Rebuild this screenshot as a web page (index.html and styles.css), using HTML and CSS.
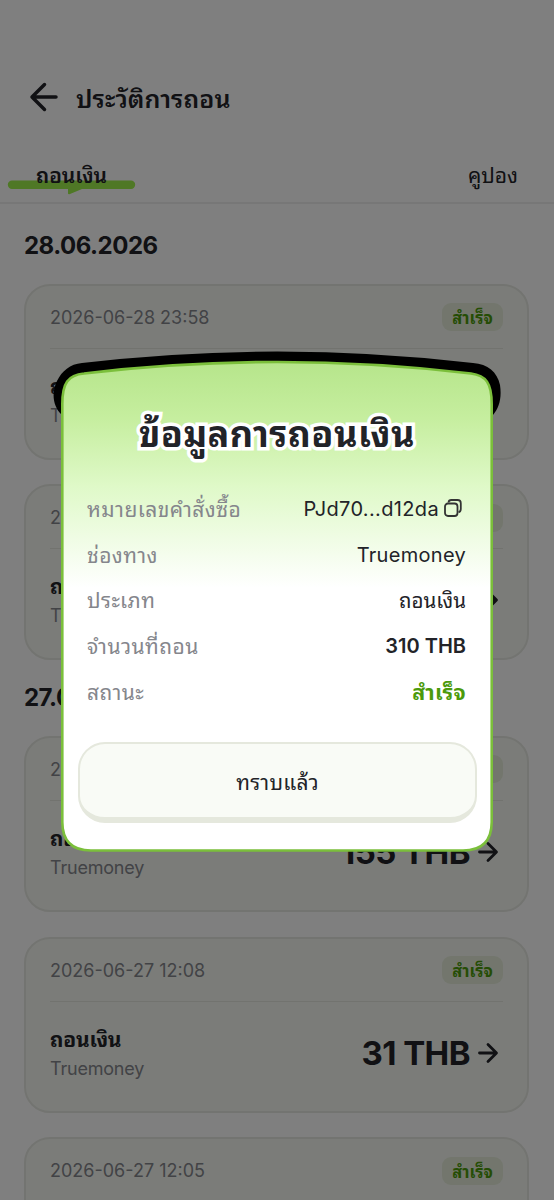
FILE: index.html
```html
<!DOCTYPE html>
<html lang="th">
<head>
<meta charset="utf-8">
<title>ประวัติการถอน</title>
<link rel="stylesheet" href="styles.css">
</head>
<body>
<div class="page">
  <header class="header">
    <svg class="back" width="28" height="28" viewBox="0 0 28 28"><path d="M14.500 1.600 2 14 14.500 26.400M2 14H26"/></svg>
    <h1 class="title">ประวัติการถอน</h1>
  </header>
  <nav class="tabs">
    <div class="tab tab-active">
      <svg class="marker" width="127" height="16" viewBox="0 0 127 16"><path d="M4 .500H123A4.200 4.200 0 0 1 123 8.900H74L62 14Q59.500 15 60 12.500V8.900H4A4.200 4.200 0 0 1 4 .500Z"/></svg>
      <span class="tab-label label-bold">ถอนเงิน</span>
    </div>
    <div class="tab"><span class="tab-label">คูปอง</span></div>
  </nav>
  <main class="list">
    <h2 class="date">28.06.2026</h2>
    <article class="card">
      <div class="card-top"><span class="time">2026-06-28 23:58</span><span class="badge">สำเร็จ</span></div>
      <div class="card-body">
        <div class="info"><span class="kind">ถอนเงิน</span><span class="via">Truemoney</span></div>
        <div class="sum"><span class="amount">310 THB</span><svg class="go" width="20" height="20" viewBox="0 0 20 20"><path d="M1.500 10H18M10 1.500 18.500 10 10 18.500"/></svg></div>
      </div>
    </article>
    <article class="card">
      <div class="card-top"><span class="time">2026-06-28 12:10</span><span class="badge">สำเร็จ</span></div>
      <div class="card-body">
        <div class="info"><span class="kind">ถอนเงิน</span><span class="via">Truemoney</span></div>
        <div class="sum"><span class="amount">155 THB</span><svg class="go" width="20" height="20" viewBox="0 0 20 20"><path d="M1.500 10H18M10 1.500 18.500 10 10 18.500"/></svg></div>
      </div>
    </article>
    <h2 class="date date-next">27.06.2026</h2>
    <article class="card">
      <div class="card-top"><span class="time">2026-06-27 12:10</span><span class="badge">สำเร็จ</span></div>
      <div class="card-body">
        <div class="info"><span class="kind">ถอนเงิน</span><span class="via">Truemoney</span></div>
        <div class="sum"><span class="amount">155 THB</span><svg class="go" width="20" height="20" viewBox="0 0 20 20"><path d="M1.500 10H18M10 1.500 18.500 10 10 18.500"/></svg></div>
      </div>
    </article>
    <article class="card">
      <div class="card-top"><span class="time">2026-06-27 12:08</span><span class="badge">สำเร็จ</span></div>
      <div class="card-body">
        <div class="info"><span class="kind">ถอนเงิน</span><span class="via">Truemoney</span></div>
        <div class="sum"><span class="amount">31 THB</span><svg class="go" width="20" height="20" viewBox="0 0 20 20"><path d="M1.500 10H18M10 1.500 18.500 10 10 18.500"/></svg></div>
      </div>
    </article>
    <article class="card">
      <div class="card-top"><span class="time">2026-06-27 12:05</span><span class="badge">สำเร็จ</span></div>
    </article>
  </main>
</div>
<div class="overlay">
  <section class="modal">
    <svg class="modal-shape" width="446" height="500" viewBox="54 352 446 500">
      <defs><linearGradient id="fade" gradientUnits="userSpaceOnUse" x1="0" y1="362" x2="0" y2="588"><stop offset="0" stop-color="#b6e58b"/><stop offset=".25" stop-color="#c6ee9f"/><stop offset=".55" stop-color="#dff9c8"/><stop offset="1" stop-color="#fff"/></linearGradient></defs>
      <path d="M62 415C53 407 51 393 57 381C62 371 70 364 82 363Q277 340 473 363C488 364 497 372 500 385C502 398 499 408 493 415Z"/>
      <path fill="url(#fade)" stroke="#7bbf3b" stroke-width="2.600" d="M62.300 404C62.300 383 68 375 84 373.500Q277 350.500 471 373.500C486 375.500 491.700 383 491.700 404V822Q491.700 850.500 463 850.500H91Q62.300 850.500 62.300 822Z"/>
    </svg>
    <div class="modal-content">
      <h3 class="modal-title">ข้อมูลการถอนเงิน</h3>
      <dl class="rows">
        <div class="row"><dt>หมายเลขคำสั่งซื้อ</dt><dd class="order">PJd70...d12da<svg class="copy" width="18" height="18" viewBox="0 0 18 18"><rect x="1" y="4.500" width="12.500" height="12.500" rx="3"/><path d="M4.500 3.500Q4.800 1 7.300 1H13.500Q16.800 1 16.800 4.300V10Q16.800 12.800 14.500 13.200"/></svg></dd></div>
        <div class="row"><dt>ช่องทาง</dt><dd class="channel">Truemoney</dd></div>
        <div class="row"><dt>ประเภท</dt><dd class="thai-value">ถอนเงิน</dd></div>
        <div class="row"><dt>จำนวนที่ถอน</dt><dd class="strong">310 THB</dd></div>
        <div class="row"><dt>สถานะ</dt><dd class="success">สำเร็จ</dd></div>
      </dl>
      <button class="ok">ทราบแล้ว</button>
    </div>
  </section>
</div>
</body>
</html>
```
FILE: styles.css
```css
* { box-sizing: border-box; }
body { margin: 0; background: #fff; color: #222328; font-family: Inter, "Noto Sans Thai Looped", Loma, Waree, "Noto Sans", sans-serif; height: 1200px; overflow: hidden; }
h1, h2, h3, dl, dd { margin: 0; }
svg { display: block; flex: none; fill: none; overflow: visible; }
.page { height: 1200px; overflow: hidden; }
.header { display: flex; align-items: center; gap: 18px; height: 146px; padding: 48px 30px 0; }
.back { stroke: #222328; stroke-width: 3.500; stroke-linecap: round; stroke-linejoin: round; }
.title { font-size: 25px; line-height: 36px; font-weight: 600; letter-spacing: .1px; padding-top: 3px; }
.tabs { display: flex; justify-content: space-between; height: 58px; padding: 12px 36px 0; border-bottom: 2px solid #eee; }
.tab { position: relative; height: 36px; }
.tab-label { position: relative; font-size: 21px; line-height: 36px; }
.label-bold { font-weight: 600; }
.marker { position: absolute; left: -28px; top: 22px; fill: #9ff04c; }
.list { padding: 21px 25px 0 24px; }
.date { font-size: 24px; line-height: 40px; font-weight: 700; letter-spacing: -.5px; padding-top: 1px; margin-bottom: 17.500px; }
.date-next { margin-top: -7.500px; }
.card { height: 176px; border: 2px solid #e7e9e2; border-radius: 26px; background: #f6f9f3; padding: 0 24px; margin-bottom: 24.700px; }
.card-top { display: flex; justify-content: space-between; align-items: center; height: 63px; padding-top: 1px; border-bottom: 1px solid #e4e6df; }
.time { font-size: 18px; color: #85868c; }
.badge { width: 61px; height: 28px; border-radius: 9px; background: #e6edda; color: #4b9a0b; font-size: 16.500px; line-height: 30px; font-weight: 700; text-align: center; }
.card-body { display: flex; justify-content: space-between; padding: 22px 5px 0 0; }
.info { display: flex; flex-direction: column; }
.kind { font-size: 21px; line-height: 32px; font-weight: 700; letter-spacing: -.2px; }
.via { font-size: 18px; line-height: 26px; color: #85868c; letter-spacing: -.2px; }
.sum { display: flex; align-items: center; gap: 8px; height: 58px; }
.amount { font-size: 33px; line-height: 40px; font-weight: 700; letter-spacing: -.55px; }
.go { stroke: #222328; stroke-width: 2.800; stroke-linecap: round; stroke-linejoin: round; }
.overlay { position: absolute; inset: 0; height: 1200px; background: rgba(0, 0, 0, .5); padding: 352px 54px 0; }
.modal { position: relative; width: 446px; height: 500px; }
.modal-shape { position: absolute; left: 0; top: 0; fill: #000; }
.modal-content { position: relative; padding: 57px 24px 0; }
.modal-title { font-size: 36px; line-height: 50px; font-weight: 700; letter-spacing: .45px; text-align: center; -webkit-text-stroke: 7px #fff; paint-order: stroke fill; stroke-linejoin: round; }
.rows { padding: 27px 10px 0 9px; }
.row { display: flex; justify-content: space-between; align-items: center; height: 45.800px; font-size: 20px; line-height: 30px; }
dt { color: #85868c; font-size: 21px; letter-spacing: .45px; padding-top: 2px; }
.order { display: flex; align-items: center; gap: 5px; padding-right: 4px; letter-spacing: .35px; }
.copy { stroke: #333; stroke-width: 1.800; margin-top: -1px; }
.channel { letter-spacing: .3px; }
.thai-value { font-size: 20.500px; padding-top: 2px; }
.strong { font-weight: 600; }
.success { color: #4b9a0b; font-weight: 700; font-size: 21.500px; letter-spacing: .2px; }
.ok { display: block; width: 399px; height: 81px; margin-top: 27px; border: 2.500px solid #e5e8dd; border-bottom-width: 6px; border-radius: 27px; background: #f9fbf6; color: #222328; font: 21px/74px Inter, "Noto Sans Thai Looped", Loma, Waree, "Noto Sans", sans-serif; letter-spacing: .2px; padding: 2px 0 0; }
```
